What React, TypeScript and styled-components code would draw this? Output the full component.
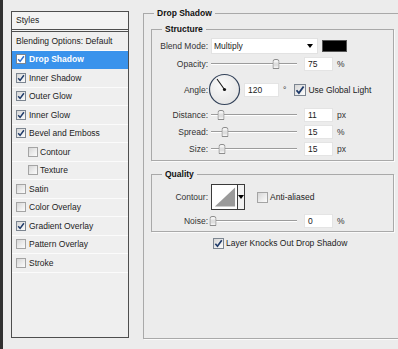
import React from "react";
import styled, { createGlobalStyle } from "styled-components";

const Global = createGlobalStyle`
  html, body { margin: 0; padding: 0; background: #ececec; }
  body {
    font-family: "Liberation Sans", Arial, sans-serif;
    font-size: 8.5px;
    color: #222;
  }
  *, *::before, *::after { box-sizing: border-box; }
`;

const Window = styled.div`
  width: 398px;
  height: 349px;
  overflow: hidden;
  display: flex;
  align-items: flex-start;
  background: #ececec;
  border-left: 3px solid #303030;
`;

/* ---------- left styles list ---------- */

const StylesPanel = styled.div`
  flex: none;
  margin: 11px 0 0 8px;
  width: 118px;
  height: 327px;
  border: 1px solid #4e4e4e;
  background: #efefef;
  display: flex;
  flex-direction: column;
`;

const PanelHeader = styled.div`
  height: 20px;
  line-height: 17px;
  padding-left: 4px;
  background: #f3f3f3;
  border-bottom: 3px double #4e4e4e;
  color: #222;
`;

const ListRow = styled.div<{ $selected?: boolean; $indent?: boolean }>`
  height: 18.5px;
  flex: none;
  display: flex;
  align-items: center;
  gap: ${(p) => (p.$indent ? "2px" : "3px")};
  padding-left: ${(p) => (p.$indent ? "16px" : "4px")};
  border-bottom: 1px solid ${(p) => (p.$selected ? "#3a93ec" : "#fbfbfb")};
  background: ${(p) => (p.$selected ? "#3a93ec" : "transparent")};
  color: ${(p) => (p.$selected ? "#fff" : "#222")};
  font-weight: ${(p) => (p.$selected ? "bold" : "normal")};
  white-space: nowrap;
`;

const Box = styled.span<{ $size: number; $checked?: boolean; $light?: boolean }>`
  flex: none;
  width: ${(p) => p.$size}px;
  height: ${(p) => p.$size}px;
  border: 1px solid ${(p) => (p.$checked ? "#7c8590" : "#a4a4a4")};
  background: ${(p) =>
    p.$light
      ? "#fff"
      : "linear-gradient(135deg, #d6d6d6 0%, #eeeeee 60%, #fbfbfb 100%)"};
  display: flex;
  align-items: center;
  justify-content: center;
`;

function CheckBox({
  checked,
  size = 10,
  light,
}: {
  checked?: boolean;
  size?: number;
  light?: boolean;
}) {
  return (
    <Box $size={size} $checked={checked} $light={light}>
      {checked && (
        <svg width={size - 2} height={size - 2} viewBox="0 0 8 8">
          <path
            d="M1.2 4.2 L3.1 6.4 L6.9 1.2"
            fill="none"
            stroke={light ? "#2c6fd0" : "#1f3b6a"}
            strokeWidth="1.5"
          />
        </svg>
      )}
    </Box>
  );
}

const styleItems = [
  { label: "Drop Shadow", checked: true, selected: true },
  { label: "Inner Shadow", checked: true },
  { label: "Outer Glow", checked: true },
  { label: "Inner Glow", checked: true },
  { label: "Bevel and Emboss", checked: true },
  { label: "Contour", checked: false, indent: true },
  { label: "Texture", checked: false, indent: true },
  { label: "Satin", checked: false },
  { label: "Color Overlay", checked: false },
  { label: "Gradient Overlay", checked: true },
  { label: "Pattern Overlay", checked: false },
  { label: "Stroke", checked: false },
];

/* ---------- right settings ---------- */

const Group = styled.fieldset<{ $outer?: boolean }>`
  margin: 0;
  min-width: 0;
  border: 1px solid #a9a9a9;
  box-shadow: 1px 1px 0 #fafafa;
  padding: ${(p) => (p.$outer ? "0 0 0 7px" : "0")};
`;

const OuterGroup = styled(Group)`
  flex: none;
  margin: 7px 0 0 14px;
  width: 275px;
  height: 332px;
  display: flex;
  flex-direction: column;
`;

const InnerGroup = styled(Group)<{ $top: number; $padTop: number; $padBottom: number }>`
  width: 243px;
  margin-top: ${(p) => p.$top}px;
  padding-top: ${(p) => p.$padTop}px;
  padding-bottom: ${(p) => p.$padBottom}px;
`;

const Title = styled.legend<{ $indent: number }>`
  margin-left: ${(p) => p.$indent}px;
  padding: 0 3px;
  line-height: 12px;
  font-weight: bold;
  color: #111;
`;

const FieldRow = styled.div<{ $h: number }>`
  height: ${(p) => p.$h}px;
  display: flex;
  align-items: center;
  white-space: nowrap;
`;

const Label = styled.span`
  flex: none;
  width: 56px;
  margin-right: 3px;
  text-align: right;
  color: #333;
`;

const Select = styled.div`
  flex: none;
  width: 107px;
  height: 16px;
  background: #fff;
  border: 1px solid #e2e2e2;
  display: flex;
  align-items: center;
  justify-content: space-between;
  padding: 0 4px 0 2px;
  color: #222;
`;

const Arrow = styled.span`
  width: 0;
  height: 0;
  border-left: 3.5px solid transparent;
  border-right: 3.5px solid transparent;
  border-top: 4px solid #000;
`;

const Swatch = styled.span<{ $color: string }>`
  flex: none;
  margin-left: 4px;
  width: 25px;
  height: 12px;
  background: ${(p) => p.$color};
  border: 1px solid #555;
`;

const Track = styled.div`
  position: relative;
  flex: none;
  width: 86px;
  height: 12px;
  &::before {
    content: "";
    position: absolute;
    left: 0;
    right: 0;
    top: 5px;
    height: 1px;
    background: #9c9c9c;
    box-shadow: 0 1px 0 #fff;
  }
`;

const Thumb = styled.svg`
  position: absolute;
  top: 1px;
  transform: translateX(-50%);
`;

function Slider({ pos }: { pos: number }) {
  return (
    <Track>
      <Thumb width="7" height="10" viewBox="0 0 7 10" style={{ left: `${pos}%` }}>
        <path
          d="M0.5 9.5 V2.5 Q0.5 0.5 2.5 0.5 H4.5 Q6.5 0.5 6.5 2.5 V9.5 Z"
          fill="#f3f3f3"
          stroke="#8d8d8d"
        />
        <path d="M2.5 3.5 V7.5 M4.5 3.5 V7.5" stroke="#c9c9c9" />
      </Thumb>
    </Track>
  );
}

const NumberBox = styled.div<{ $w: number; $gap: number }>`
  flex: none;
  width: ${(p) => p.$w}px;
  height: 14px;
  margin-left: ${(p) => p.$gap}px;
  background: #fff;
  border: 1px solid #e4e4e4;
  padding-left: 3px;
  line-height: 12px;
  color: #222;
`;

const Unit = styled.span<{ $gap?: number }>`
  margin-left: ${(p) => p.$gap ?? 4}px;
  color: #333;
`;

const Dial = styled.svg`
  flex: none;
  margin-left: -3px;
`;

const ContourPicker = styled.div`
  flex: none;
  width: 34px;
  height: 26px;
  border: 1px solid #3a3a3a;
  display: flex;
  background: #fff;
`;

const ContourArrow = styled.div`
  flex: 1;
  border-left: 1px solid #3a3a3a;
  background: #f2f2f2;
  display: flex;
  align-items: center;
  justify-content: center;
`;

const CheckLabel = styled.span`
  margin-left: 2px;
  color: #222;
`;

const KnockRow = styled.div`
  margin-top: 4px;
  height: 14px;
  padding-left: 62px;
  display: flex;
  align-items: center;
  white-space: nowrap;
`;

function SliderRow({
  label,
  pos,
  value,
  unit,
  h,
}: {
  label: string;
  pos: number;
  value: string;
  unit: string;
  h: number;
}) {
  return (
    <FieldRow $h={h}>
      <Label>{label}</Label>
      <Slider pos={pos} />
      <NumberBox $w={29} $gap={7}>{value}</NumberBox>
      <Unit>{unit}</Unit>
    </FieldRow>
  );
}

export default function App() {
  return (
    <>
      <Global />
      <Window>
        <StylesPanel>
          <PanelHeader>Styles</PanelHeader>
          <ListRow>Blending Options: Default</ListRow>
          {styleItems.map((it) => (
            <ListRow key={it.label} $selected={it.selected} $indent={it.indent}>
              <CheckBox checked={it.checked} light={it.selected} />
              <span>{it.label}</span>
            </ListRow>
          ))}
        </StylesPanel>

        <OuterGroup $outer>
          <Title $indent={3}>Drop Shadow</Title>

          <InnerGroup $top={4} $padTop={2} $padBottom={3}>
            <Title $indent={10}>Structure</Title>
            <FieldRow $h={18}>
              <Label>Blend Mode:</Label>
              <Select>
                <span>Multiply</span>
                <Arrow />
              </Select>
              <Swatch $color="#000" />
            </FieldRow>
            <SliderRow label="Opacity:" pos={75} value="75" unit="%" h={18} />
            <FieldRow $h={33}>
              <Label>Angle:</Label>
              <Dial width="33" height="33" viewBox="0 0 33 33">
                <defs>
                  <radialGradient id="dialFill" cx="40%" cy="35%" r="70%">
                    <stop offset="0%" stopColor="#fafafa" />
                    <stop offset="100%" stopColor="#e4e4e4" />
                  </radialGradient>
                </defs>
                <circle cx="16.5" cy="16.5" r="15" fill="url(#dialFill)" stroke="#34435a" strokeWidth="1.2" />
                <line x1="16.5" y1="16.5" x2="9" y2="6" stroke="#1a1a1a" strokeWidth="1.1" />
                <circle cx="16.5" cy="16.5" r="1.6" fill="#111" />
              </Dial>
              <NumberBox $w={35} $gap={3}>120</NumberBox>
              <Unit>°</Unit>
              <Unit $gap={8}>
                <CheckBox checked size={12} />
              </Unit>
              <CheckLabel>Use Global Light</CheckLabel>
            </FieldRow>
            <SliderRow label="Distance:" pos={12} value="11" unit="px" h={17} />
            <SliderRow label="Spread:" pos={16} value="15" unit="%" h={17} />
            <SliderRow label="Size:" pos={13} value="15" unit="px" h={17} />
          </InnerGroup>

          <InnerGroup $top={7} $padTop={3} $padBottom={0}>
            <Title $indent={10}>Quality</Title>
            <FieldRow $h={28}>
              <Label>Contour:</Label>
              <ContourPicker>
                <svg width="26" height="24" viewBox="0 0 26 24">
                  <polygon points="3,22 24,2 24,22" fill="#9a9a9a" />
                </svg>
                <ContourArrow>
                  <Arrow />
                </ContourArrow>
              </ContourPicker>
              <Unit $gap={12}>
                <CheckBox size={11} />
              </Unit>
              <CheckLabel>Anti-aliased</CheckLabel>
            </FieldRow>
            <SliderRow label="Noise:" pos={2} value="0" unit="%" h={20} />
          </InnerGroup>

          <KnockRow>
            <CheckBox checked size={11} />
            <CheckLabel>Layer Knocks Out Drop Shadow</CheckLabel>
          </KnockRow>
        </OuterGroup>
      </Window>
    </>
  );
}
